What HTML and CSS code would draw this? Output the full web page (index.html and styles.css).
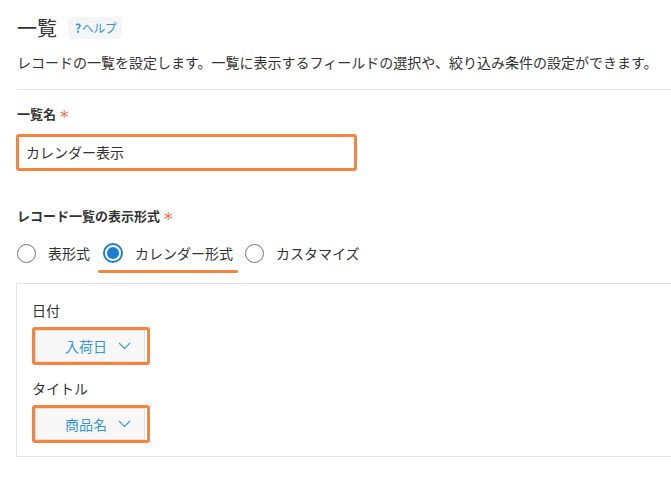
FILE: index.html
```html
<!DOCTYPE html>
<html lang="ja">
<head>
<meta charset="utf-8">
<link rel="stylesheet" href="styles.css">
</head>
<body>
<div class="page">
  <div class="head">
    <h1 class="title">一覧</h1>
    <span class="help"><span class="q">?</span>ヘルプ</span>
  </div>
  <p class="desc">レコードの一覧を設定します。一覧に表示するフィールドの選択や、絞り込み条件の設定ができます。</p>
  <hr class="rule">
  <div class="label">一覧名 <span class="req">*</span></div>
  <div class="input-wrap"><div class="input">カレンダー表示</div></div>
  <div class="label label2">レコード一覧の表示形式 <span class="req">*</span></div>
  <div class="radios">
    <label class="radio"><span class="circle"></span><span>表形式</span></label>
    <label class="radio checked"><span class="circle"><span class="dot"></span></span><span>カレンダー形式</span><span class="underline"></span></label>
    <label class="radio"><span class="circle"></span><span>カスタマイズ</span></label>
  </div>
  <div class="panel">
    <div class="field-label">日付</div>
    <div class="dd-wrap"><div class="dd"><span>入荷日</span><svg class="chev" width="13" height="8" viewBox="0 0 13 8"><path d="M1 1 L6.5 6.5 L12 1" fill="none" stroke="#3498db" stroke-width="1.1"/></svg></div></div>
    <div class="field-label fl2">タイトル</div>
    <div class="dd-wrap"><div class="dd"><span>商品名</span><svg class="chev" width="13" height="8" viewBox="0 0 13 8"><path d="M1 1 L6.5 6.5 L12 1" fill="none" stroke="#3498db" stroke-width="1.1"/></svg></div></div>
  </div>
</div>
</body>
</html>
```
FILE: styles.css
```css
html, body { margin: 0; padding: 0; background: #fff; }
body {
  font-family: "Noto Sans CJK JP", "Noto Sans", sans-serif;
  color: #333;
  font-size: 14px;
  overflow: hidden;
}
.page { padding: 15px 0 0 17px; }
.head { display: flex; align-items: center; height: 26px; }
.title { margin: 0; font-size: 20px; font-weight: normal; line-height: 26px; color: #333; }
.help {
  margin-left: 11px;
  background: #f3f5f7;
  border-radius: 4px;
  height: 22px;
  line-height: 22px;
  padding: 0 6px 0 7px;
  font-size: 12px;
  color: #3498db;
  letter-spacing: -0.5px;
}
.help .q { font-weight: bold; margin-right: 1px; }
.desc { margin: 11px 0 0; line-height: 20px; }
.rule { border: 0; border-top: 1px solid #e3e3e3; margin: 17px 0 0; }
.label { display: flex; align-items: center; font-weight: bold; font-size: 13px; line-height: 20px; height: 20px; margin-top: 14px; color: #333; }
.req {
  display: inline-block;
  color: #ec6a52;
  font-family: "DejaVu Sans", sans-serif;
  font-weight: normal;
  font-size: 17px;
  line-height: 20px;
  height: 20px;
  margin-left: 4px;
  margin-top: 6px;
}
.input-wrap {
  margin-top: 10px;
  margin-left: -1px;
  width: 335px;
  height: 31px;
  border: 3px solid #f5843e;
  border-radius: 3px;
  background: #fff;
}
.input { padding-left: 7px; line-height: 31px; font-size: 14px; color: #333; }
.label2 { margin-top: 35px; }
.radios { display: flex; align-items: center; margin-top: 15px; height: 24px; }
.radio { position: relative; display: flex; align-items: center; margin-right: 12px; }
.radio .circle {
  width: 17px; height: 17px;
  border: 1.5px solid #777;
  border-radius: 50%;
  margin-right: 12px;
  display: flex; align-items: center; justify-content: center;
  box-sizing: content-box;
}
.radio.checked .circle { border: 2px solid #1a7fd3; width: 16px; height: 16px; margin-left: 1px; }
.radio .dot { width: 12px; height: 12px; border-radius: 50%; background: #1a7fd3; }
.underline {
  position: absolute;
  left: -4px; right: -5px;
  bottom: -10px;
  height: 3px;
  border-radius: 2px;
  background: #f5843e;
}
.panel {
  margin-top: 18px;
  margin-left: -1px;
  border: 1px solid #e3e3e3;
  border-right: 0;
  height: 156px;
  padding: 16px 0 0 15px;
}
.field-label { line-height: 20px; font-size: 14px; }
.fl2 { margin-top: 13px; }
.dd-wrap {
  margin-top: 7px;
  width: 112px;
  height: 32px;
  border: 3px solid #f5843e;
  border-radius: 3px;
}
.dd {
  width: 108px;
  height: 30px;
  border: 1px solid #e0e0e0;
  background: #f7f7f7;
  display: flex; align-items: center;
  color: #3498db;
  box-sizing: content-box;
}
.dd span { margin-left: 29px; }
.chev { margin-left: 11px; }
```
